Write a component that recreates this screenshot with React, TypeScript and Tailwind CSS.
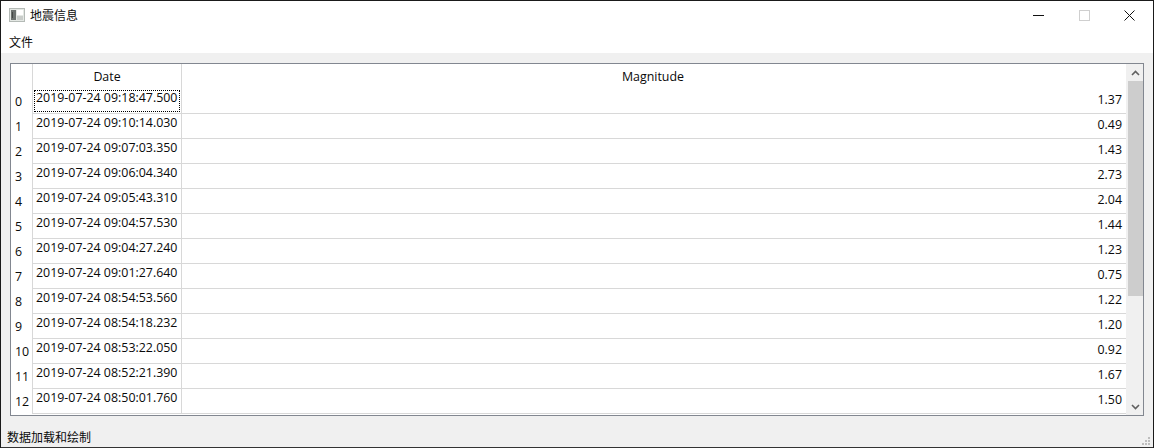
import React from "react";

const rows: [string, string][] = [
  ["2019-07-24 09:18:47.500", "1.37"],
  ["2019-07-24 09:10:14.030", "0.49"],
  ["2019-07-24 09:07:03.350", "1.43"],
  ["2019-07-24 09:06:04.340", "2.73"],
  ["2019-07-24 09:05:43.310", "2.04"],
  ["2019-07-24 09:04:57.530", "1.44"],
  ["2019-07-24 09:04:27.240", "1.23"],
  ["2019-07-24 09:01:27.640", "0.75"],
  ["2019-07-24 08:54:53.560", "1.22"],
  ["2019-07-24 08:54:18.232", "1.20"],
  ["2019-07-24 08:53:22.050", "0.92"],
  ["2019-07-24 08:52:21.390", "1.67"],
  ["2019-07-24 08:50:01.760", "1.50"],
];

const font = "font-['Open_Sans','Noto_Sans_CJK_SC',sans-serif]";
const cjk = "font-['Noto_Sans_CJK_SC','Noto_Sans',sans-serif]";

const AppIcon = () => (
  <svg width="16" height="14" viewBox="0 0 16 14" className="block">
    <rect x="0.5" y="0.5" width="15" height="13" fill="#e4e8e4" stroke="#b4bab6" />
    <rect x="2" y="2" width="5" height="10" fill="#6d7270" />
    <rect x="3" y="4" width="1" height="6" fill="#454846" />
    <rect x="8" y="2" width="6" height="5" fill="#ffffff" />
    <rect x="8" y="8" width="6" height="4" fill="#c9cdca" />
  </svg>
);

const App = () => {
  return (
    <div className={`w-[1154px] h-[448px] flex flex-col bg-[#f0f0f0] border border-b-0 border-[#1a1a1a] text-[12.4px] text-[#0a0a0a] overflow-hidden ${font}`}>
      {/* title bar */}
      <div className="h-[28px] bg-white flex items-center shrink-0">
        <div className="ml-[8px] mr-[5px]"><AppIcon /></div>
        <span className={`${cjk} text-[12px] leading-none`}>地震信息</span>
        <div className="ml-auto flex items-center h-full pr-[1px]">
          <div className="w-[46px] flex justify-center">
            <svg width="11" height="11" viewBox="0 0 11 11"><path d="M0 5.5h11" stroke="#111" strokeWidth="1" /></svg>
          </div>
          <div className="w-[46px] flex justify-center">
            <svg width="11" height="11" viewBox="0 0 11 11"><rect x="0.5" y="0.5" width="10" height="10" fill="none" stroke="#cfcfcf" /></svg>
          </div>
          <div className="w-[45px] flex justify-center">
            <svg width="11" height="11" viewBox="0 0 11 11"><path d="M0.5 0.5l10 10M10.5 0.5l-10 10" stroke="#111" strokeWidth="1" /></svg>
          </div>
        </div>
      </div>

      {/* menu bar */}
      <div className="h-[24px] bg-white flex items-center shrink-0 pl-[8px] pt-[2px]">
        <span className={`${cjk} text-[12px] leading-none`}>文件</span>
      </div>

      {/* table view */}
      <div className="flex-1 min-h-0 pt-[10px] pl-[9px] pr-[9px] flex flex-col">
        <div className="h-[353px] bg-white border border-[#828790] flex overflow-hidden">
          <div className="flex-1 min-w-0 flex flex-col overflow-hidden">
            <div className="h-[25px] shrink-0 flex">
              <div className="w-[22px] border-r border-[#d8d8d8] shrink-0" />
              <div className="w-[149px] border-r border-[#d8d8d8] shrink-0 flex items-center justify-center pt-[1px]">Date</div>
              <div className="flex-1 flex items-center justify-center pt-[1px] pr-[2px]">Magnitude</div>
            </div>
            {rows.map(([date, mag], i) => (
              <div key={i} className="h-[25px] shrink-0 flex">
                <div className="w-[22px] border-r border-[#d8d8d8] shrink-0 pl-[4px] pt-[4px]">{i}</div>
                <div className="w-[149px] border-r border-b border-[#d8d8d8] shrink-0 p-[1px]">
                  <div className={`h-[22px] pl-[2px] whitespace-nowrap leading-[16px] ${i === 0 ? "outline-1 -outline-offset-1 outline-dotted outline-black" : ""}`}>
                    {date}
                  </div>
                </div>
                <div className="flex-1 border-b border-[#d8d8d8] text-right pr-[4px] pt-[2px] leading-[18px]">{mag}</div>
              </div>
            ))}
          </div>

          {/* scroll bar */}
          <div className="w-[17px] shrink-0 bg-[#f0f0f0] border-l border-[#f0f0f0] flex flex-col items-center">
            <div className="h-[17px] flex items-center justify-center shrink-0">
              <svg width="9" height="6" viewBox="0 0 9 6"><path d="M1 5l3.5-3.5L8 5" fill="none" stroke="#606060" strokeWidth="1.6" /></svg>
            </div>
            <div className="w-[15px] h-[215px] bg-[#cdcdcd] shrink-0" />
            <div className="mt-auto h-[17px] flex items-center justify-center shrink-0">
              <svg width="9" height="6" viewBox="0 0 9 6"><path d="M1 1l3.5 3.5L8 1" fill="none" stroke="#606060" strokeWidth="1.6" /></svg>
            </div>
          </div>
        </div>
      </div>

      {/* status bar */}
      <div className="h-[22px] shrink-0 flex items-center pl-[6px] pr-[2px] border-b border-[#333]">
        <span className={`${cjk} text-[12px] leading-none`}>数据加载和绘制</span>
        <svg width="10" height="10" viewBox="0 0 10 10" className="ml-auto self-end mb-[1px]" fill="#bdbdbd">
          <rect x="7" y="1" width="2" height="2" />
          <rect x="4" y="4" width="2" height="2" />
          <rect x="7" y="4" width="2" height="2" />
          <rect x="1" y="7" width="2" height="2" />
          <rect x="4" y="7" width="2" height="2" />
          <rect x="7" y="7" width="2" height="2" />
        </svg>
      </div>
    </div>
  );
};

export default App;
